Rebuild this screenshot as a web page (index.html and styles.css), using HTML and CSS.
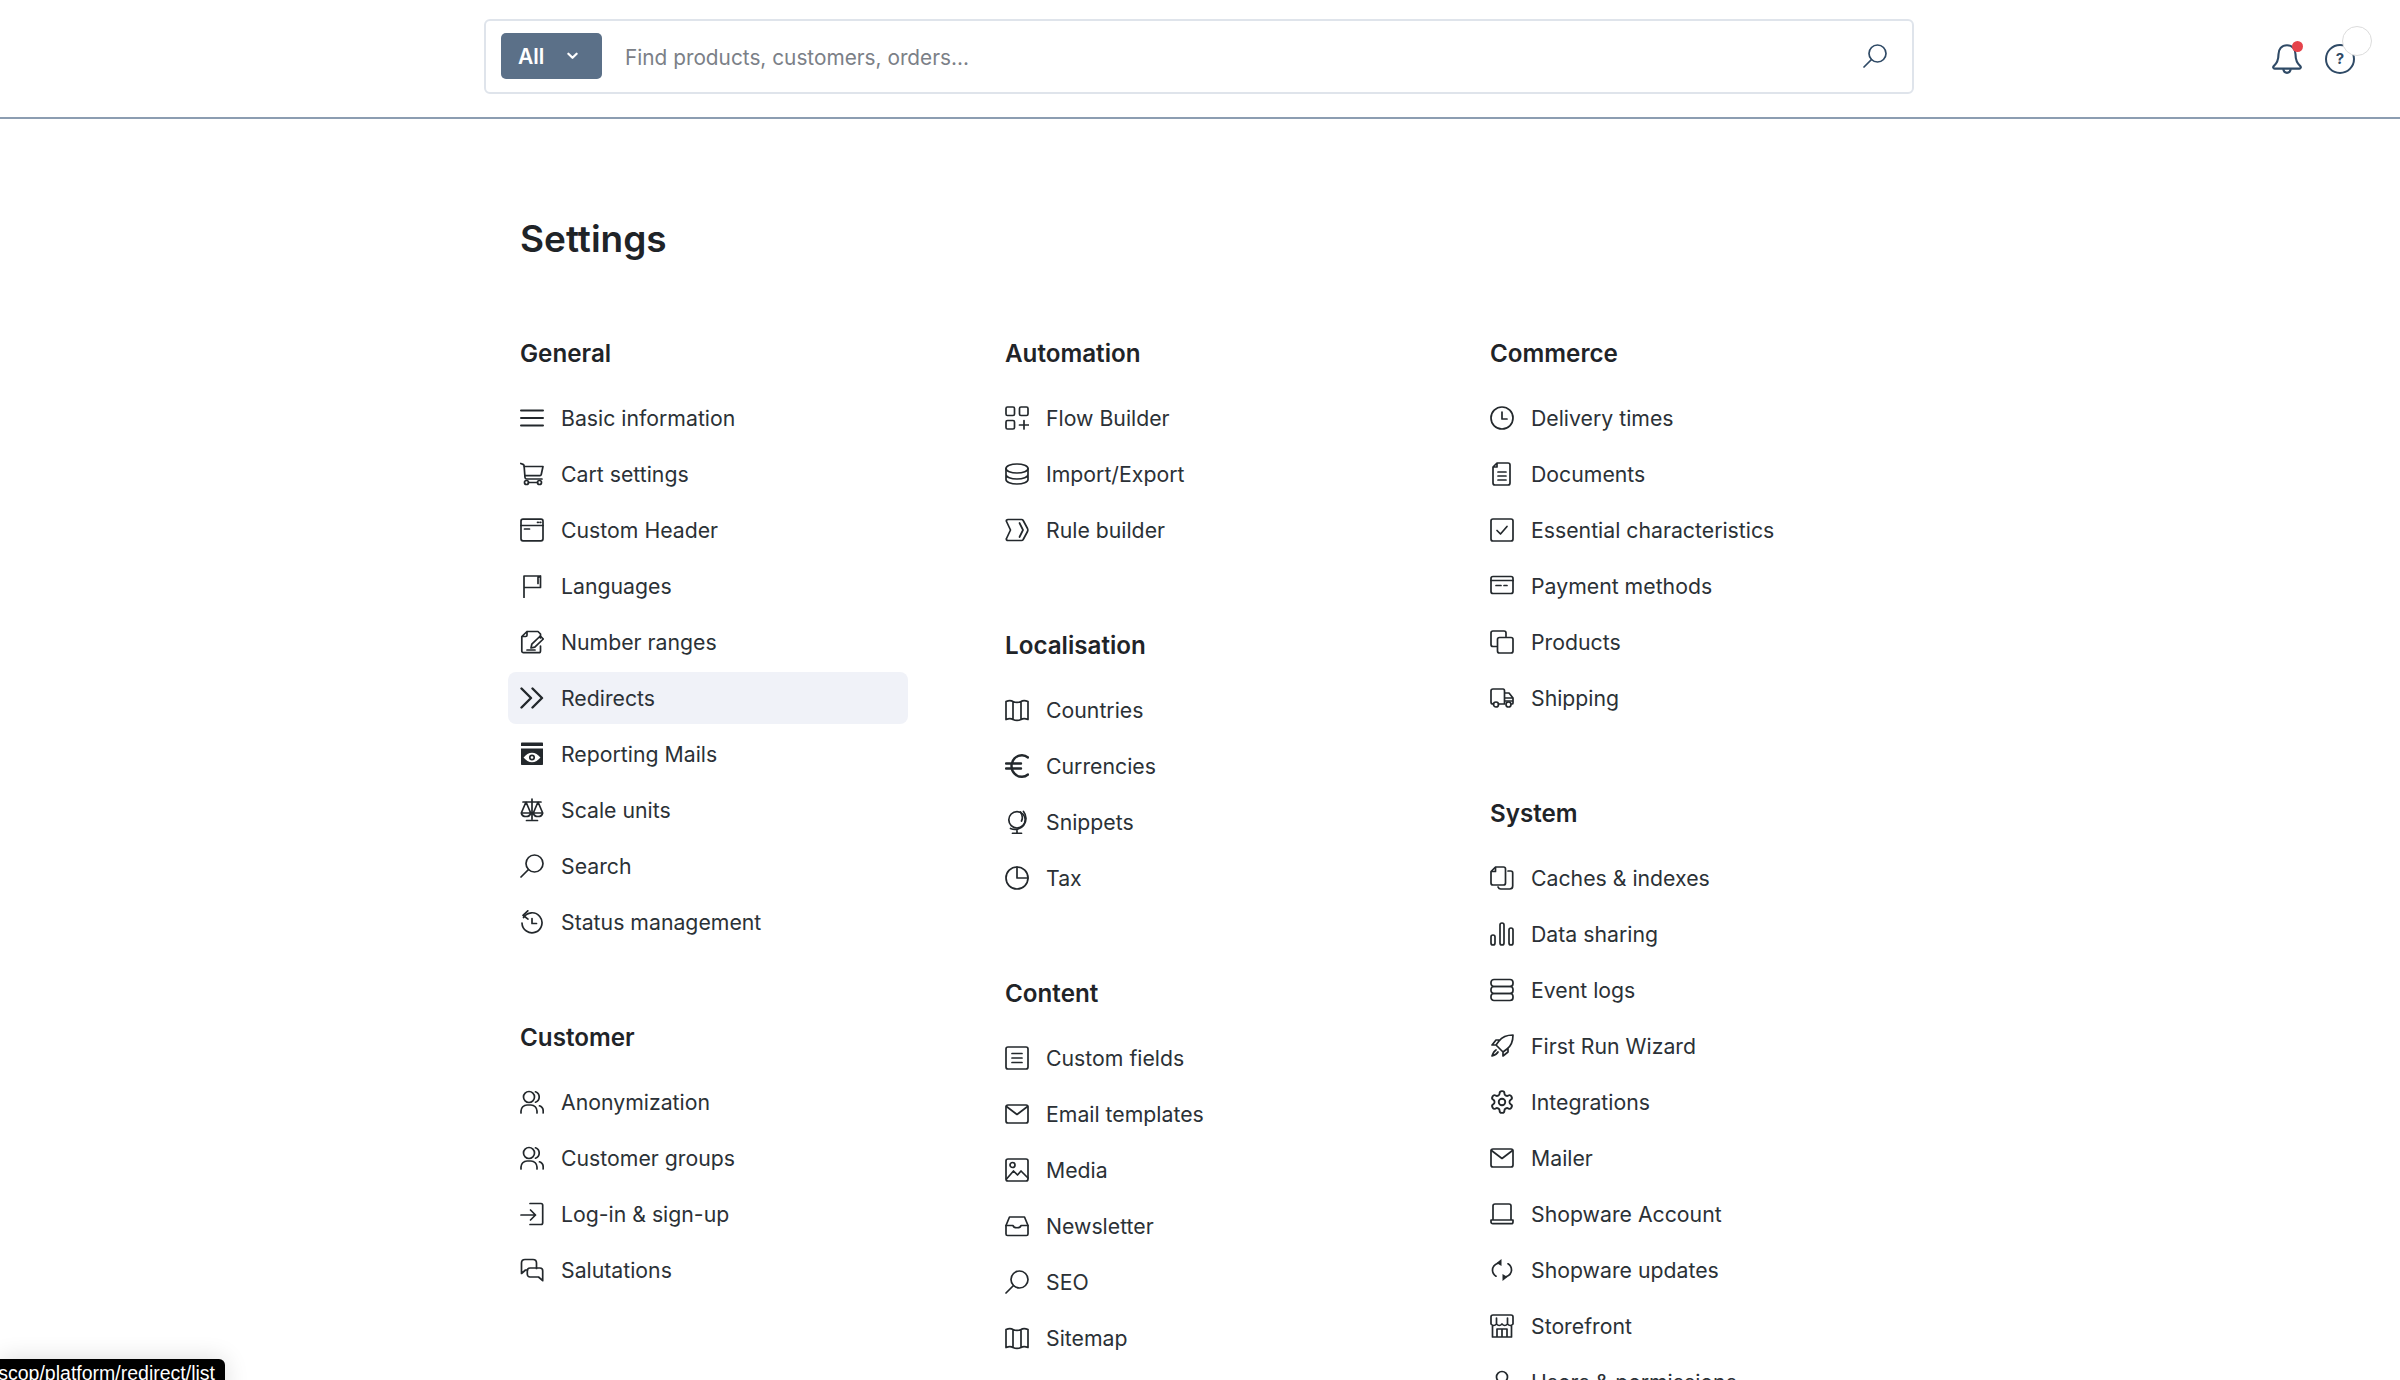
FILE: index.html
```html
<!DOCTYPE html>
<html lang="en">
<head>
<meta charset="utf-8">
<title>Settings</title>
<link rel="stylesheet" href="styles.css">
</head>
<body>
<svg class="sprite" xmlns="http://www.w3.org/2000/svg">
<symbol id="i-menu" viewBox="0 0 24 24"><path class="mid" d="M1 4.500h22M1 12h22M1 19.500h22"/></symbol>
<symbol id="i-cart" viewBox="0 0 24 24"><path d="M.8 1.500 3 2.400c.7.300 1 .800 1.100 1.500L5 15.500c.1 1 .7 1.500 1.600 1.500H22"/><path d="M4.300 4.500H23l-1.800 8.200c-.1.600-.6 1-1.200 1H4.900"/><circle cx="6.500" cy="20.500" r="2"/><circle cx="19.500" cy="20.500" r="2"/><path d="M8.500 20.500h9"/></symbol>
<symbol id="i-window" viewBox="0 0 24 24"><rect x="1" y="1.200" width="22" height="21.600" rx="2"/><path d="M1 7.500h22M4.500 11h5M17.500 4.300h.8M20 4.300h.8"/></symbol>
<symbol id="i-flag" viewBox="0 0 24 24"><path d="M4 23.500V2h16.500v11.500H4M20.500 2l-2.500 1.500v6"/></symbol>
<symbol id="i-numbers" viewBox="0 0 24 24"><path d="M7 1.500h11l2.500 2.500v4M20.500 16v5c0 1-.7 1.700-1.700 1.700H3.500c-1 0-1.700-.7-1.700-1.700V6.500L7 1.500v3.700c0 .8-.5 1.300-1.300 1.300H1.800"/><path d="m11 18 .8-3.800L20.300 6l3 3-8.500 8.200zM7 20h8"/></symbol>
<symbol id="i-redirects" viewBox="0 0 24 24"><path class="thick" d="m1.500 2.500 9.500 9.500-9.500 9.500M12.500 2.500 22 12l-9.500 9.500"/></symbol>
<symbol id="i-report" viewBox="0 0 24 24"><path class="solid" d="M1 1.500C1 .9 1.500.5 2 .5h20c.6 0 1 .4 1 1V4H1z"/><path class="solid" d="M1 6.500h22V22c0 .6-.4 1-1 1H2c-.6 0-1-.4-1-1z"/><path class="eye" d="M2.500 15.500C6 11 9 9.800 12 9.800s6 1.200 9.500 5.700c-3.500 4.500-6.500 5.700-9.500 5.700s-6-1.200-9.500-5.700z"/><circle cx="12" cy="15.500" r="2.200"/></symbol>
<symbol id="i-scale" viewBox="0 0 24 24"><path d="M12 1v20M6.500 22.500h11M3 4h18M6 4 1.300 15h9.400zM18 4l-4.700 11h9.400zM1.300 15c.4 2.200 2.500 3.500 4.700 3.500s4.300-1.300 4.700-3.500M13.300 15c.4 2.200 2.500 3.500 4.700 3.500s4.300-1.300 4.700-3.500"/></symbol>
<symbol id="i-search" viewBox="0 0 24 24"><circle cx="14.500" cy="9.500" r="8.500"/><path d="m8.500 15.500-7.500 7.500"/></symbol>
<symbol id="i-status" viewBox="0 0 24 24"><path d="M3.500 7.500A10 10 0 1 1 2 13"/><path d="m7.800.8-4.800 4.500 5 3.800M12 8.500v5h4.500"/></symbol>
<symbol id="i-users" viewBox="0 0 24 24"><circle cx="9" cy="7" r="5.500"/><path d="M1 23v-2c0-3.300 2.700-6 6-6h4c3.300 0 6 2.700 6 6v2M15.500 1.800a5.500 5.500 0 0 1 0 10.400M19.500 15.800c2.200.8 3.700 2.800 3.700 5.200v2"/></symbol>
<symbol id="i-login" viewBox="0 0 24 24"><path d="M1 13h14.500M10.500 8l5 5-5 5M10 1.500h11c1 0 1.700.7 1.700 1.700v17.600c0 1-.7 1.700-1.700 1.700H10"/></symbol>
<symbol id="i-chat" viewBox="0 0 24 24"><path d="M16.500 10.500V5c0-2-1.500-3.500-3.500-3.500H5C3 1.500 1.500 3 1.500 5v10.500l4-3.500h2"/><path d="M10 10h10c1.500 0 2.700 1.200 2.700 2.700v10L18.500 19H10c-1.500 0-2.700-1.200-2.700-2.700v-3.600C7.300 11.200 8.500 10 10 10z"/></symbol>
<symbol id="i-flow" viewBox="0 0 24 24"><rect x="1" y="1" width="8.500" height="8.500" rx="1.500"/><rect x="14.500" y="1" width="8.500" height="8.500" rx="1.500"/><rect x="1" y="14.500" width="8.500" height="8.500" rx="1.500"/><path d="M19 14.500v8.500M14.500 19h9"/></symbol>
<symbol id="i-db" viewBox="0 0 24 24"><ellipse cx="12" cy="6.500" rx="11" ry="4.500"/><path d="M1 6.500v11c0 2.500 5 4.500 11 4.500s11-2 11-4.500v-11M1 12.500c0 2.500 5 4.500 11 4.500s11-2 11-4.500"/></symbol>
<symbol id="i-rule" viewBox="0 0 24 24"><path d="M3 1.500h13.500c.7 0 1.300.3 1.700 1l4.300 8c.4.900.4 2 0 3l-4.300 8c-.4.700-1 1-1.700 1H3c-1.200 0-2-1-1.500-2L5.500 12 1.500 3.500C1 2.500 1.800 1.500 3 1.500z"/><path d="m14.500 5 3.500 7-3.500 7"/></symbol>
<symbol id="i-map" viewBox="0 0 24 24"><path d="M1 3.500c3-1.400 5-1.400 7 0 2.500 1.200 5.500 1.200 8 0 2-1.400 4-1.400 7 0v18c-3-1.400-5-1.400-7 0-2.500 1.200-5.500 1.200-8 0-2-1.400-4-1.400-7 0zM8 3.500v18M16 3.500v18"/></symbol>
<symbol id="i-euro" viewBox="0 0 24 24"><path class="thick" d="M23 3.500C21.300 2 19.300 1.200 17 1.200 11 1.200 6.500 6 6.500 12S11 22.800 17 22.800c2.300 0 4.300-.8 6-2.300M1 9.500h15M1 14.500h15"/></symbol>
<symbol id="i-globe" viewBox="0 0 24 24"><circle cx="12" cy="9.800" r="8.200"/><path d="M18.500 1.500a11 11 0 0 1-13 17M12 20v3.300M7.500 23.300h9M15.500 2c2 3 2.500 6 1 9"/></symbol>
<symbol id="i-pie" viewBox="0 0 24 24"><circle cx="12" cy="12" r="11"/><path d="M12 1v11h11"/></symbol>
<symbol id="i-list" viewBox="0 0 24 24"><rect x="1" y="1" width="22" height="22" rx="2"/><path d="M7 7.500h10M7 12h10M7 16.500h10"/></symbol>
<symbol id="i-mail" viewBox="0 0 24 24"><rect x="1" y="3" width="22" height="18" rx="2"/><path d="m1.500 4.500 10.500 8 10.500-8"/></symbol>
<symbol id="i-image" viewBox="0 0 24 24"><rect x="1" y="1" width="22" height="22" rx="2"/><circle cx="7.500" cy="7" r="2.500"/><path d="m1.500 21 7-8 4 4 3.500-4 7 7"/></symbol>
<symbol id="i-inbox" viewBox="0 0 24 24"><path d="M4.500 3h15L23 11.500V20c0 1-.7 1.500-1.500 1.500h-19C1.700 21.500 1 21 1 20v-8.500z"/><path d="M1 11.500h7c.7 3 7.300 3 8 0h7"/></symbol>
<symbol id="i-clock" viewBox="0 0 24 24"><circle cx="12" cy="12" r="11"/><path d="M12 6v7h5"/></symbol>
<symbol id="i-doc" viewBox="0 0 24 24"><path d="M7 1h11c1 0 2 .9 2 2v18c0 1-1 2-2 2H5c-1 0-2-1-2-2V5zM7 1v4H3"/><path d="M8 10h8M8 14h8M8 18h8"/></symbol>
<symbol id="i-check" viewBox="0 0 24 24"><rect x="1" y="1" width="22" height="22" rx="2"/><path d="m7 12.500 3.500 3.500L17 8.500"/></symbol>
<symbol id="i-card" viewBox="0 0 24 24"><rect x="1" y="2.500" width="22" height="17" rx="2"/><path d="M1 6.500h22M6 11.500h5M14 11.500h3"/></symbol>
<symbol id="i-copy" viewBox="0 0 24 24"><path d="M6.500 16.500H3c-1 0-2-1-2-2V3c0-1 1-2 2-2h11c1 0 2 1 2 2v3.500"/><rect x="7.500" y="7.500" width="15.500" height="15.500" rx="2"/></symbol>
<symbol id="i-truck" viewBox="0 0 24 24"><path d="M3.500 18H3c-1 0-2-.8-2-2V5c0-1 1-2 2-2h10c1 0 1.500.8 1.500 2v13H8.500M14.500 7h4.500l4 5v5c0 .6-.4 1-1 1h-.5M14.500 12H23M14.500 15h8"/><circle cx="6" cy="18.500" r="2.500"/><circle cx="18.500" cy="18.500" r="2.500"/></symbol>
<symbol id="i-files" viewBox="0 0 24 24"><path d="M5.500 1h8c1 0 2 1 2 2v14c0 1-1 2-2 2H3c-1 0-2-1-2-2V5.500zM5.500 1v4.500H1"/><path d="M18 5h2.800c1 0 1.900.9 1.900 2v13c0 1.900-1.200 3-3 3h-9c-1.300 0-2.200-.8-2.700-2"/></symbol>
<symbol id="i-bars" viewBox="0 0 24 24"><rect x="1" y="13" width="4" height="10" rx="2"/><rect x="10" y="1" width="4" height="22" rx="2"/><rect x="19" y="6" width="4" height="17" rx="2"/></symbol>
<symbol id="i-stack" viewBox="0 0 24 24"><rect x="1" y="1.500" width="22" height="7" rx="3"/><rect x="1" y="8.500" width="22" height="7" rx="3"/><rect x="1" y="15.500" width="22" height="7" rx="3"/></symbol>
<symbol id="i-rocket" viewBox="0 0 24 24"><path d="M23 1c-7 0-11 2-14 6l-3 4 7 7 4-3c4-3 6-7 6-14zM6 11H2l4-5h4M13 18v4l5-4v-4M6 16c-2 1-3 3-4 6 3-1 5-2 6-4"/></symbol>
<symbol id="i-gear" viewBox="1 1 22 22"><path d="M12.220 2h-.44a2 2 0 0 0-2 2v.18a2 2 0 0 1-1 1.730l-.43.25a2 2 0 0 1-2 0l-.15-.08a2 2 0 0 0-2.730.73l-.22.38a2 2 0 0 0 .73 2.730l.15.1a2 2 0 0 1 1 1.720v.51a2 2 0 0 1-1 1.740l-.15.09a2 2 0 0 0-.73 2.730l.22.38a2 2 0 0 0 2.730.73l.15-.08a2 2 0 0 1 2 0l.43.25a2 2 0 0 1 1 1.730V20a2 2 0 0 0 2 2h.44a2 2 0 0 0 2-2v-.18a2 2 0 0 1 1-1.730l.43-.25a2 2 0 0 1 2 0l.15.08a2 2 0 0 0 2.730-.73l.22-.39a2 2 0 0 0-.73-2.730l-.15-.08a2 2 0 0 1-1-1.740v-.5a2 2 0 0 1 1-1.740l.15-.09a2 2 0 0 0 .73-2.730l-.22-.38a2 2 0 0 0-2.730-.73l-.15.08a2 2 0 0 1-2 0l-.43-.25a2 2 0 0 1-1-1.730V4a2 2 0 0 0-2-2z"/><circle cx="12" cy="12" r="3"/></symbol>
<symbol id="i-laptop" viewBox="0 0 24 24"><path d="M3 18V4c0-1 1-2 2-2h14c1 0 2 1 2 2v14M1 18h22v2c0 1-.8 1.700-1.700 1.700H2.700C1.800 21.700 1 21 1 20z"/></symbol>
<symbol id="i-sync" viewBox="0 0 24 24"><path d="M8 5.200C4.600 6.500 2.500 9 2.500 12c0 2.600 1.300 4.800 3.500 6.200M16 18.800c3.400-1.300 5.500-3.800 5.500-6.800 0-2.600-1.300-4.800-3.500-6.200"/><path class="solid" d="m11.500 1-5 4 5 3zM12.500 23l5-4-5-3z"/></symbol>
<symbol id="i-store" viewBox="0 0 24 24"><path d="M3 1h18c1 0 2 1 2 2v7c-1.700 2-3.700 2-5.500 0-1.800 2-3.700 2-5.500 0-1.800 2-3.700 2-5.500 0C4.700 12 2.700 12 1 10V3c0-1 1-2 2-2zM2.500 12v11h19V12M7 23v-8h10v8M12 15v8M6.500 4v6M17.500 4v6"/></symbol>
<symbol id="i-user" viewBox="0 0 24 24"><circle cx="12" cy="7" r="5.500"/><path d="M2 23v-2c0-3.300 2.700-6 6-6h8c3.300 0 6 2.700 6 6v2"/></symbol>
<symbol id="i-bell" viewBox="0 0 32 32"><path d="M16 3C10.800 3 8 7 8 11.500c0 6.500-2 9-4.500 11.200-1 1-.4 2.300.8 2.300h23.400c1.200 0 1.800-1.300.8-2.300C26 20.500 24 18 24 11.500 24 7 21.200 3 16 3z"/><path d="M12.500 25.500c.3 2 1.700 3.500 3.500 3.500s3.200-1.500 3.500-3.500"/></symbol>
</svg>

<header class="topbar">
  <div class="topbar-spacer"></div>
  <form class="search">
    <button class="search-type" type="button">All
      <svg class="chevron" viewBox="0 0 12 8"><path d="m1.500 1.500 4.500 4.500 4.500-4.500"/></svg>
    </button>
    <span class="search-placeholder">Find products, customers, orders...</span>
    <svg class="icon search-icon"><use href="#i-search"/></svg>
  </form>
  <div class="actions">
    <span class="bell">
      <svg class="bell-icon"><use href="#i-bell"/></svg>
      <span class="bell-dot"></span>
    </span>
    <span class="help">?<span class="help-ghost"></span></span>
  </div>
</header>

<main class="page">
  <h1 class="page-title">Settings</h1>
  <div class="columns">
    <div class="column">
      <section class="group">
        <h2 class="group-title">General</h2>
        <a class="item"><svg class="icon"><use href="#i-menu"/></svg>Basic information</a>
        <a class="item"><svg class="icon"><use href="#i-cart"/></svg>Cart settings</a>
        <a class="item"><svg class="icon"><use href="#i-window"/></svg>Custom Header</a>
        <a class="item"><svg class="icon"><use href="#i-flag"/></svg>Languages</a>
        <a class="item"><svg class="icon"><use href="#i-numbers"/></svg>Number ranges</a>
        <a class="item item-active"><svg class="icon"><use href="#i-redirects"/></svg>Redirects</a>
        <a class="item"><svg class="icon"><use href="#i-report"/></svg>Reporting Mails</a>
        <a class="item"><svg class="icon"><use href="#i-scale"/></svg>Scale units</a>
        <a class="item"><svg class="icon"><use href="#i-search"/></svg>Search</a>
        <a class="item"><svg class="icon"><use href="#i-status"/></svg>Status management</a>
      </section>
      <section class="group">
        <h2 class="group-title">Customer</h2>
        <a class="item"><svg class="icon"><use href="#i-users"/></svg>Anonymization</a>
        <a class="item"><svg class="icon"><use href="#i-users"/></svg>Customer groups</a>
        <a class="item"><svg class="icon"><use href="#i-login"/></svg>Log-in &amp; sign-up</a>
        <a class="item"><svg class="icon"><use href="#i-chat"/></svg>Salutations</a>
      </section>
    </div>
    <div class="column">
      <section class="group">
        <h2 class="group-title">Automation</h2>
        <a class="item"><svg class="icon"><use href="#i-flow"/></svg>Flow Builder</a>
        <a class="item"><svg class="icon"><use href="#i-db"/></svg>Import/Export</a>
        <a class="item"><svg class="icon"><use href="#i-rule"/></svg>Rule builder</a>
      </section>
      <section class="group">
        <h2 class="group-title">Localisation</h2>
        <a class="item"><svg class="icon"><use href="#i-map"/></svg>Countries</a>
        <a class="item"><svg class="icon"><use href="#i-euro"/></svg>Currencies</a>
        <a class="item"><svg class="icon"><use href="#i-globe"/></svg>Snippets</a>
        <a class="item"><svg class="icon"><use href="#i-pie"/></svg>Tax</a>
      </section>
      <section class="group">
        <h2 class="group-title">Content</h2>
        <a class="item"><svg class="icon"><use href="#i-list"/></svg>Custom fields</a>
        <a class="item"><svg class="icon"><use href="#i-mail"/></svg>Email templates</a>
        <a class="item"><svg class="icon"><use href="#i-image"/></svg>Media</a>
        <a class="item"><svg class="icon"><use href="#i-inbox"/></svg>Newsletter</a>
        <a class="item"><svg class="icon"><use href="#i-search"/></svg>SEO</a>
        <a class="item"><svg class="icon"><use href="#i-map"/></svg>Sitemap</a>
      </section>
    </div>
    <div class="column">
      <section class="group">
        <h2 class="group-title">Commerce</h2>
        <a class="item"><svg class="icon"><use href="#i-clock"/></svg>Delivery times</a>
        <a class="item"><svg class="icon"><use href="#i-doc"/></svg>Documents</a>
        <a class="item"><svg class="icon"><use href="#i-check"/></svg>Essential characteristics</a>
        <a class="item"><svg class="icon"><use href="#i-card"/></svg>Payment methods</a>
        <a class="item"><svg class="icon"><use href="#i-copy"/></svg>Products</a>
        <a class="item"><svg class="icon"><use href="#i-truck"/></svg>Shipping</a>
      </section>
      <section class="group">
        <h2 class="group-title">System</h2>
        <a class="item"><svg class="icon"><use href="#i-files"/></svg>Caches &amp; indexes</a>
        <a class="item"><svg class="icon"><use href="#i-bars"/></svg>Data sharing</a>
        <a class="item"><svg class="icon"><use href="#i-stack"/></svg>Event logs</a>
        <a class="item"><svg class="icon"><use href="#i-rocket"/></svg>First Run Wizard</a>
        <a class="item"><svg class="icon"><use href="#i-gear"/></svg>Integrations</a>
        <a class="item"><svg class="icon"><use href="#i-mail"/></svg>Mailer</a>
        <a class="item"><svg class="icon"><use href="#i-laptop"/></svg>Shopware Account</a>
        <a class="item"><svg class="icon"><use href="#i-sync"/></svg>Shopware updates</a>
        <a class="item"><svg class="icon"><use href="#i-store"/></svg>Storefront</a>
        <a class="item"><svg class="icon"><use href="#i-user"/></svg>Users &amp; permissions</a>
      </section>
    </div>
  </div>
</main>

<div class="status-link"><span>scop/platform/redirect/list</span></div>
</body>
</html>
```
FILE: styles.css
```css
* { box-sizing: border-box; }
html, body { margin: 0; height: 100%; overflow: hidden; }
body {
  position: relative;
  background: #fff;
  color: #2b3136;
  font-family: Inter, "Noto Sans", sans-serif;
}
.sprite { display: none; }

.topbar {
  display: grid;
  grid-template-columns: 484px 1430px 1fr;
  align-items: center;
  height: 119px;
  padding-bottom: 5px;
  border-bottom: 2px solid #8c9db1;
}
.search {
  display: flex;
  align-items: center;
  height: 75px;
  padding: 0 25px 0 15px;
  border: 2px solid #dfe4eb;
  border-radius: 6px;
  background: #fff;
}
.search-type {
  display: flex;
  align-items: center;
  justify-content: space-between;
  width: 101px;
  height: 46px;
  padding: 0 24px 0 17px;
  border: 0;
  border-radius: 5px;
  background: #5b7088;
  color: #fff;
  font: 600 21px Inter, sans-serif;
}
.chevron { width: 11px; height: 8px; fill: none; stroke: #fff; stroke-width: 2.400; stroke-linecap: round; stroke-linejoin: round; }
.search-placeholder {
  flex: 1;
  margin-left: 23px;
  padding-top: 2px;
  font-size: 20.800px;
  color: #7b8087;
}
.search-icon { color: #2f4a66; stroke-width: 2.200; }
.actions {
  display: flex;
  justify-content: flex-end;
  align-items: center;
  gap: 21px;
  padding: 5px 45px 0 0;
}
.bell { position: relative; width: 34px; height: 34px; display: block; }
.bell-icon { width: 34px; height: 34px; fill: none; stroke: #2f4a66; stroke-width: 2; display: block; }
.bell-dot {
  position: absolute;
  top: -1px;
  right: 1px;
  width: 11px;
  height: 11px;
  border-radius: 50%;
  background: #e5434b;
}
.help {
  position: relative;
  display: flex;
  align-items: center;
  justify-content: center;
  width: 30px;
  height: 30px;
  border: 2px solid #2f4a66;
  border-radius: 50%;
  color: #2f4a66;
  font-size: 15px;
  font-weight: 700;
}
.help-ghost {
  position: absolute;
  top: -20px;
  left: 15px;
  width: 30px;
  height: 30px;
  border: 1.500px solid #dcdcdc;
  border-radius: 50%;
  background: #fff;
}

.page { padding: 98px 0 0 520px; }
.page-title {
  margin: 0 0 77px;
  height: 44px;
  font-size: 37px;
  line-height: 44px;
  font-weight: 600;
  color: #1f2428;
}
.columns {
  display: grid;
  grid-template-columns: repeat(3, 485px);
}
.column { display: flex; flex-direction: column; gap: 72px; }
.group { display: flex; flex-direction: column; }
.group-title {
  margin: 0 0 20px;
  font-size: 24.200px;
  line-height: 32px;
  font-weight: 600;
  color: #1f2428;
}
.item {
  display: flex;
  align-items: center;
  gap: 17px;
  width: 400px;
  height: 52px;
  margin: 2.030px 0 2.030px -12px;
  padding-left: 12px;
  border-radius: 8px;
  font-size: 21.250px;
  color: #2b3136;
}
.item-active { background: #f0f2f8; }
.icon {
  flex: none;
  width: 24px;
  height: 24px;
  fill: none;
  stroke: #23282c;
  stroke-width: 1.700;
  stroke-linecap: round;
  stroke-linejoin: round;
}
.search-icon { stroke: #2f4a66; }
.thick { stroke-width: 2.400; }
.mid { stroke-width: 2; }
.solid { fill: #23282c; stroke: none; }
.eye { fill: #fff; }

.status-link {
  position: absolute;
  left: 0;
  top: 1359px;
  display: flex;
  justify-content: flex-end;
  width: 225px;
  height: 40px;
  padding-right: 10px;
  border-radius: 0 6px 0 0;
  background: #000;
  box-shadow: 0 0 24px rgba(0, 0, 0, .14);
  color: #fff;
  font: 19.500px/28px "Liberation Sans", Arial, sans-serif;
  white-space: nowrap;
  overflow: hidden;
}
```
